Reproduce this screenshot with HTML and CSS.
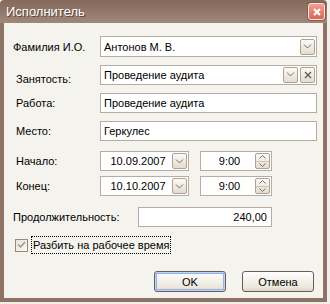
FILE: index.html
```html
<!DOCTYPE html>
<html lang="ru">
<head>
  <meta charset="UTF-8">
  <title>Исполнитель</title>
  <link rel="stylesheet" href="styles.css">
</head>
<body>
  <div class="window">
    <div class="titlebar">
      <span class="title">Исполнитель</span>
      <div class="close">
        <svg width="8" height="8" viewBox="0 0 8 8"><path d="M1 1 L7 7 M7 1 L1 7" stroke="#fff" stroke-width="2"/></svg>
      </div>
    </div>

    <div class="content">
      <!-- Person -->
      <div class="row row-name">
        <div class="label label-first">Фамилия И.О.</div>
        <div class="field field-wide h21">
          <span class="text">Антонов М. В.</span>
          <div class="btn">
            <svg width="9" height="5" viewBox="0 0 9 5"><path d="M1 0.5 L4.5 4 L8 0.5" stroke="#7d6c5e" fill="none"/></svg>
          </div>
        </div>
      </div>

      <div class="row row-busy">
        <div class="label label-low">Занятость:</div>
        <div class="field field-wide">
          <span class="text">Проведение аудита</span>
          <div class="btn btn-left">
            <svg width="9" height="5" viewBox="0 0 9 5"><path d="M1 0.5 L4.5 4 L8 0.5" stroke="#7d6c5e" fill="none"/></svg>
          </div>
          <div class="btn">
            <svg width="8" height="8" viewBox="0 0 8 8"><path d="M1 1 L7 7 M7 1 L1 7" stroke="#6b5a4e" stroke-width="1.4"/></svg>
          </div>
        </div>
      </div>

      <div class="row row-gap8">
        <div class="label">Работа:</div>
        <div class="field field-wide"><span class="text">Проведение аудита</span></div>
      </div>

      <div class="row row-gap8">
        <div class="label">Место:</div>
        <div class="field field-wide"><span class="text">Геркулес</span></div>
      </div>

      <!-- Dates -->
      <div class="row row-gap10">
        <div class="label">Начало:</div>
        <div class="field field-date">
          <span class="text center">10.09.2007</span>
          <div class="btn">
            <svg width="9" height="5" viewBox="0 0 9 5"><path d="M1 0.5 L4.5 4 L8 0.5" stroke="#7d6c5e" fill="none"/></svg>
          </div>
        </div>
        <div class="field field-time">
          <span class="text center">9:00</span>
          <div class="spin">
            <div class="spin-half"><svg width="7" height="4" viewBox="0 0 7 4"><path d="M0.5 3.5 L3.5 0.5 L6.5 3.5" stroke="#7d6c5e" fill="none"/></svg></div>
            <div class="spin-half"><svg width="7" height="4" viewBox="0 0 7 4"><path d="M0.5 0.5 L3.5 3.5 L6.5 0.5" stroke="#7d6c5e" fill="none"/></svg></div>
          </div>
        </div>
      </div>

      <div class="row row-gap5">
        <div class="label">Конец:</div>
        <div class="field field-date">
          <span class="text center">10.10.2007</span>
          <div class="btn">
            <svg width="9" height="5" viewBox="0 0 9 5"><path d="M1 0.5 L4.5 4 L8 0.5" stroke="#7d6c5e" fill="none"/></svg>
          </div>
        </div>
        <div class="field field-time">
          <span class="text center">9:00</span>
          <div class="spin">
            <div class="spin-half"><svg width="7" height="4" viewBox="0 0 7 4"><path d="M0.5 3.5 L3.5 0.5 L6.5 3.5" stroke="#7d6c5e" fill="none"/></svg></div>
            <div class="spin-half"><svg width="7" height="4" viewBox="0 0 7 4"><path d="M0.5 0.5 L3.5 3.5 L6.5 0.5" stroke="#7d6c5e" fill="none"/></svg></div>
          </div>
        </div>
      </div>

      <!-- Duration -->
      <div class="row row-gap11">
        <div class="label label-first label-duration">Продолжительность:</div>
        <div class="field field-duration"><span class="text right">240,00</span></div>
      </div>

      <div class="row row-check">
        <div class="checkbox">
          <svg width="9" height="8" viewBox="0 0 9 8"><path d="M1 3.5 L3.5 6 L8 1" stroke="#a08d7e" stroke-width="1.3" fill="none"/></svg>
        </div>
        <div class="check-label">Разбить на рабочее время</div>
      </div>

      <!-- Dialog buttons -->
      <div class="buttons">
        <button class="button button-default">OK</button>
        <button class="button">Отмена</button>
      </div>
    </div>
  </div>
</body>
</html>
```

FILE: styles.css
```css
* {
  margin: 0;
  padding: 0;
  box-sizing: border-box;
}

body {
  width: 330px;
  height: 304px;
  overflow: hidden;
  background: #f1efea;
  font-family: 'Liberation Sans', Arial, sans-serif;
  font-size: 11px;
  color: #000;
}

.window {
  width: 327px;
  height: 302px;
  display: flex;
  flex-direction: column;
}

/* Title bar */
.titlebar {
  height: 23px;
  display: flex;
  align-items: center;
  padding: 0 2px 0 6px;
  background: linear-gradient(#84695c, #927869 50%, #a08878);
  color: #fff;
  font-size: 13px;
  text-shadow: 1px 1px 0 #5e4438;
  border-radius: 4px 4px 0 0;
}

.close {
  margin-left: auto;
  width: 17px;
  height: 17px;
  border: 1px solid #fbe7e2;
  border-radius: 3px;
  background: linear-gradient(#f0a094, #dc6458);
  display: flex;
  align-items: center;
  justify-content: center;
  box-shadow: 0 0 0 1px #8a5a50;
}

/* Dialog body */
.content {
  flex: 1;
  background: #f4f3ee;
  border: 4px solid #8c7366;
  border-top: none;
  padding: 13px 6px 0 9px;
  display: flex;
  flex-direction: column;
}

.row {
  display: flex;
  align-items: center;
}

.row-busy { margin-top: 7px; }
.row-gap8 { margin-top: 8px; }
.row-gap10 { margin-top: 10px; }
.row-gap5 { margin-top: 5px; }
.row-gap11 { margin-top: 11px; }

.label {
  width: 87px;
  padding-left: 3px;
}

.label-first {
  padding-left: 0;
}

.label-low {
  padding-top: 9px;
}

.label-duration {
  width: 125px;
}

/* Inputs */
.field {
  height: 20px;
  border: 1px solid #b7aca2;
  background: #fff;
  display: flex;
  align-items: center;
  padding: 0 1px 0 3px;
}

.h21 { height: 21px; }
.field-wide { width: 217px; }
.field-date { width: 89px; }
.field-time { width: 72px; margin-left: 11px; }
.field-duration { width: 134px; padding-right: 4px; }

.text {
  flex: 1;
  white-space: nowrap;
}

.center { text-align: center; }
.right { text-align: right; }

.btn {
  width: 15px;
  height: 16px;
  border: 1px solid #b0a192;
  border-radius: 2px;
  background: linear-gradient(#fbfaf6, #e3dccf);
  display: flex;
  align-items: center;
  justify-content: center;
}

.btn-left {
  margin-right: 2px;
}

.spin {
  width: 15px;
  height: 16px;
  border: 1px solid #b0a192;
  border-radius: 2px;
  background: linear-gradient(#fbfaf6, #e3dccf);
  display: flex;
  flex-direction: column;
}

.spin-half {
  flex: 1;
  display: flex;
  align-items: center;
  justify-content: center;
}

.spin-half + .spin-half {
  border-top: 1px solid #cfc4b8;
}

/* Checkbox */
.row-check {
  margin-top: 9px;
  height: 18px;
}

.checkbox {
  width: 13px;
  height: 13px;
  margin-left: 2px;
  border: 1px solid #97887c;
  background: linear-gradient(135deg, #e8e3da, #fbfaf7);
  display: flex;
  align-items: center;
  justify-content: center;
}

.check-label {
  margin-left: 3px;
  height: 18px;
  padding: 0 1px;
  line-height: 16px;
  border: 1px dotted #000;
}

/* Buttons */
.buttons {
  margin-top: 17px;
  display: flex;
  justify-content: flex-end;
  gap: 16px;
  padding-right: 3px;
}

.button {
  width: 72px;
  height: 21px;
  border: 1px solid #6e5c50;
  border-radius: 3px;
  background: linear-gradient(#ffffff, #ece7dd 80%, #dcd4c6);
  font-family: 'Liberation Sans', Arial, sans-serif;
  font-size: 11px;
  color: #000;
}

.button-default {
  box-shadow: inset 0 0 0 1px #bcd4f6, inset 0 0 0 2px #8fb4ea;
}
```
